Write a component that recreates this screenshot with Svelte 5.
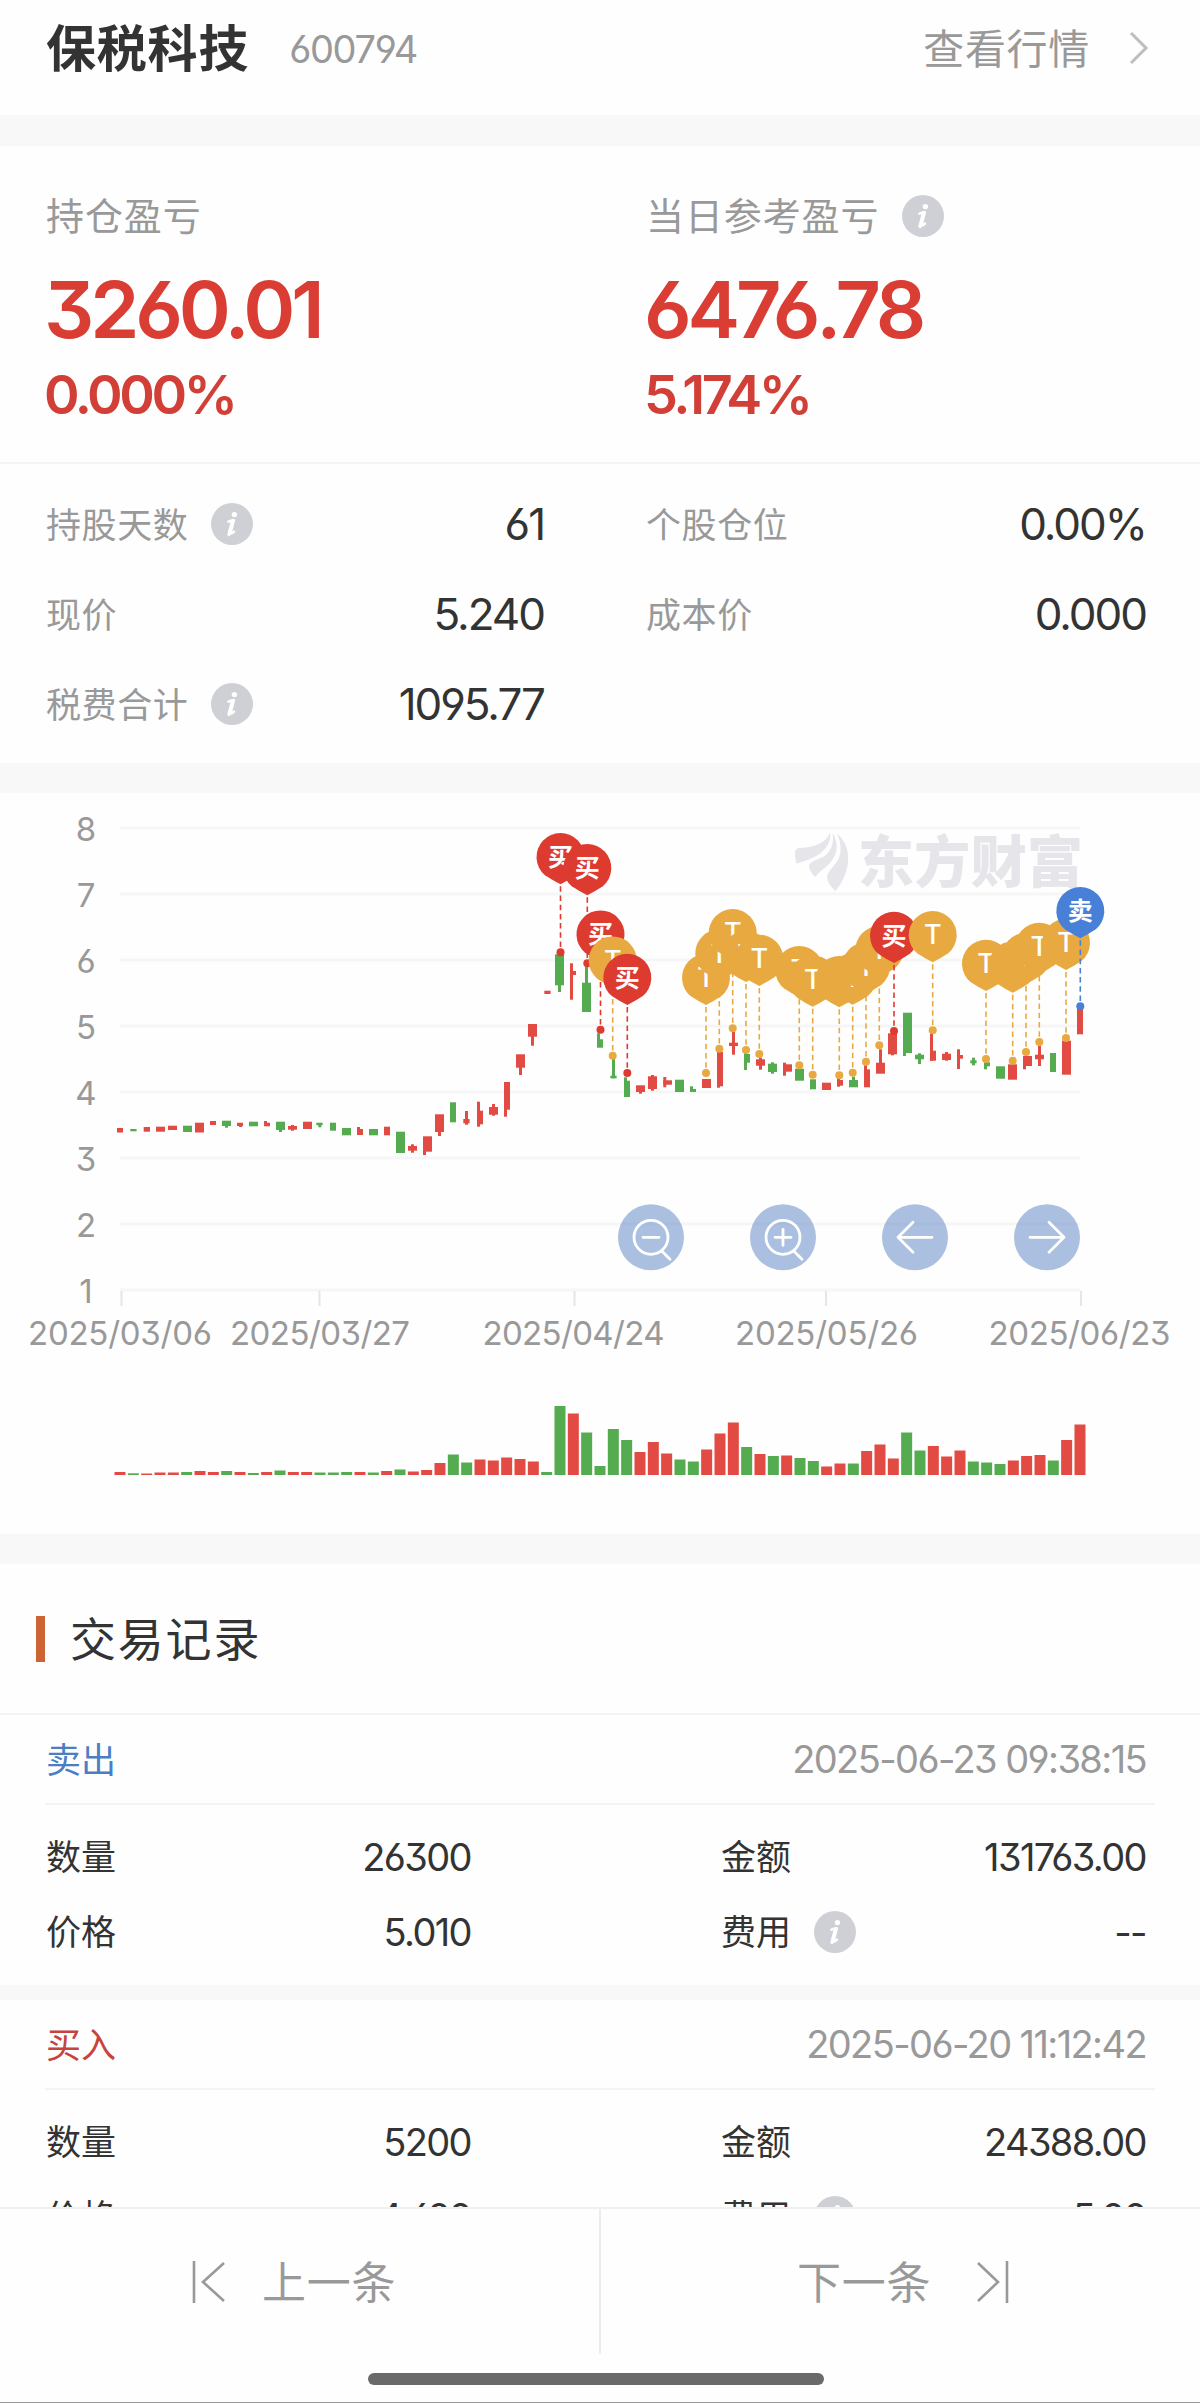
<script>
    // all chart coordinates are in svg units, 66 units per price step
    const gridLines = [8, 7, 6, 5, 4, 3, 2, 1].map((price, i) => ({ price, y: 38 + i * 66 }));

    const dates = [
        { x: 120, tick: 121.5, text: "2025/03/06", w: 184 },
        { x: 320, tick: 319.5, text: "2025/03/27", w: 180 },
        { x: 573.5, tick: 574.5, text: "2025/04/24", w: 182 },
        { x: 826.5, tick: 826, text: "2025/05/26", w: 183 },
        { x: 1079.5, tick: 1081, text: "2025/06/23", w: 182 }
    ];

    // [color, x, width, top, bottom, wick x, wick top, wick bottom]
    const candles = [
        ["r", 117, 6, 338, 342.5],
        ["g", 130.3, 6.3, 339, 341.3],
        ["r", 143.7, 6.3, 337, 341.7],
        ["r", 156, 9, 336.7, 341.7],
        ["r", 168, 9, 335.7, 340],
        ["g", 183, 9, 335.7, 342],
        ["r", 195, 9, 332.7, 342.5],
        ["r", 210, 6, 331, 335],
        ["g", 222, 9, 330.7, 336, 225, 336, 337.7],
        ["r", 237, 6, 332.7, 336, 239, 336, 337],
        ["g", 249, 9, 331.7, 336.3],
        ["r", 264, 6, 332.7, 336.3, 264, 331, 336],
        ["g", 276, 9, 331.7, 340, 279, 340, 342],
        ["r", 288, 9, 336, 339.7, 291, 335, 340.7],
        ["r", 303, 9, 331.7, 339],
        ["g", 316.3, 6.3, 332.7, 335.2, 318.3, 335, 337.3],
        ["g", 330, 6, 332.7, 340.7],
        ["g", 342, 9, 338, 345.3],
        ["r", 357, 6, 339, 345, 357, 337, 345],
        ["g", 369, 9, 339, 345.3],
        ["r", 384, 6, 336.7, 345.3],
        ["g", 396, 9, 341.7, 363],
        ["r", 408, 9, 356, 360.7, 411, 354.3, 362.7],
        ["r", 423, 9, 346.3, 361.7, 423, 361, 365],
        ["r", 435, 9, 324.3, 342, 438, 342, 346],
        ["g", 450, 6, 312.3, 332.3],
        ["r", 463.3, 6.3, 329, 333.3, 465, 321, 334.7],
        ["r", 477, 6, 320.7, 334.3, 477, 311.7, 336.7],
        ["r", 489, 9, 317, 324.7, 492, 314, 325.7],
        ["r", 504, 6, 292, 319.7, 504, 292, 326.7],
        ["r", 516, 9, 264.3, 277.7, 519, 277, 285],
        ["r", 528, 9, 234, 246.7, 531, 246, 255.7],
        ["r", 544.3, 6.3, 200.7, 204],
        ["g", 555, 9, 164.3, 195.3, 558, 195, 202],
        ["r", 570, 6, 181, 185, 570, 173.3, 209.7],
        ["g", 582, 9, 192.7, 222, 585, 176.7, 193],
        ["g", 597, 6, 249.3, 257.7, 597, 243.3, 257],
        ["g", 610.3, 6.3, 285.7, 288.3, 612, 268.3, 288.3],
        ["g", 624, 6, 290.7, 307, 624, 287.3, 307],
        ["r", 636, 9, 295.3, 302, 639, 302, 303.7],
        ["r", 648, 9, 286.3, 299, 651, 285, 300.7],
        ["r", 663.3, 8.7, 290.3, 294.7, 663.3, 287, 297.3],
        ["g", 675, 9, 289.7, 302],
        ["g", 690, 6, 299, 302, 690, 296.3, 302],
        ["r", 702, 9, 289, 298],
        ["r", 717, 6, 262, 296.3, 717, 296, 297.7],
        ["r", 729, 9, 252.7, 256, 732, 242, 264.7],
        ["g", 744, 6, 264, 272.7, 744, 263.3, 280],
        ["r", 756, 9, 269.3, 275.7, 759, 267.7, 279.7],
        ["g", 768, 9, 273.7, 282, 771, 272.3, 283.7],
        ["r", 783, 9, 274.3, 281.7, 783, 272.7, 285.7],
        ["g", 795, 9, 278.7, 290.7],
        ["g", 810, 6, 289.3, 299.3],
        ["r", 822, 9, 292.7, 300],
        ["r", 837, 6, 290, 295.7, 837, 288.7, 296.7],
        ["g", 849, 9, 290, 297.3, 852, 286.7, 297],
        ["r", 864, 6, 279.3, 297.3, 864, 275.3, 297],
        ["r", 876, 9, 272.7, 283.7, 879, 259.3, 283],
        ["r", 888, 9, 243.3, 264.3, 891, 264, 265.3],
        ["g", 903, 9, 222.7, 263, 903, 263, 266],
        ["g", 915, 9, 264.7, 269.3, 918, 263.3, 274],
        ["r", 930, 6, 260.7, 270.7, 930, 243.3, 270.7],
        ["r", 942, 9, 263.7, 270, 945, 262, 270.7],
        ["r", 957, 6, 265, 268.7, 957, 259.3, 279],
        ["g", 970.3, 6.3, 270.3, 273.3, 972, 267.7, 275.3],
        ["g", 984, 6, 272.3, 276.3, 984, 276, 279.3],
        ["g", 996, 9, 276.3, 288.7],
        ["r", 1008, 9, 274.3, 289.7],
        ["r", 1023, 9, 266, 276, 1023, 276, 279.3],
        ["r", 1035, 9, 264.7, 269.3, 1038, 256, 276],
        ["g", 1050, 6, 263, 282],
        ["r", 1062, 9, 250.7, 284.7],
        ["r", 1077, 6, 218.3, 244.3]
    ];

    // [x, y of the price dot, kind]
    const markers = [
        [560.5, 162.3, "buy"], [587.3, 173.3, "buy"], [600.5, 239.7, "buy"],
        [612.7, 265.7, "t"], [627.3, 283, "buy"], [706, 283, "t"],
        [719.3, 258.7, "t"], [732.7, 238.3, "t"], [746, 260, "t"],
        [759.3, 264, "t"], [799.3, 275.3, "t"], [812.7, 284.7, "t"],
        [839.3, 285.3, "t"], [852.7, 282.7, "t"], [866, 271.7, "t"],
        [879.3, 255.3, "t"], [894, 241, "buy"], [932.7, 240.3, "t"],
        [986, 269, "t"], [1012.7, 270.7, "t"], [1026, 262, "t"],
        [1039.3, 252, "t"], [1066, 248, "t"], [1080.3, 216.3, "sell"]
    ];
    const markerText = { buy: "买", t: "T", sell: "卖" };

    const volumes = [
        "r3", "g1.7", "r1.5", "r2.5", "r2.5", "g3", "r4", "r3", "g4", "r3",
        "g2", "r3", "g4.5", "r3", "r3", "g2.5", "g2.5", "g3", "r3", "g2.5",
        "r4", "g5.5", "r3.5", "r5", "r12", "g20.5", "g12.5", "r15.5", "r14.5", "r17.5",
        "r16", "r13.5", "g3", "g69", "r61.5", "g42.5", "g9", "g46", "g35", "r23",
        "r33", "r21.5", "g15.5", "g13.5", "r25.5", "r41.5", "r52.5", "g28", "r21", "g19",
        "r19.5", "g17", "g14", "r8.5", "r11.5", "g11.5", "r24", "r30.5", "r16.5", "g42.5",
        "g24.5", "r29", "r18.5", "r24.5", "g13.5", "g12.5", "g11", "r14.5", "r19", "r20",
        "g14.5", "r35", "r50.5"
    ].map((v) => ({ color: v[0], h: Number(v.slice(1)) }));

    const stats = [
        { label: "持股天数", info: true, value: "61" },
        { label: "个股仓位", value: "0.00%" },
        { label: "现价", value: "5.240" },
        { label: "成本价", value: "0.000" },
        { label: "税费合计", info: true, value: "1095.77" }
    ];

    const records = [
        { side: "sell", name: "卖出", time: "2025-06-23 09:38:15", count: "26300", amount: "131763.00", price: "5.010", fee: "--" },
        { side: "buy", name: "买入", time: "2025-06-20 11:12:42", count: "5200", amount: "24388.00", price: "4.690", fee: "5.00" }
    ];
</script>

{#snippet info()}
    <svg class="info" viewBox="0 0 42 42">
        <circle cx="21" cy="21" r="21" fill="#cfd0d5" />
        <circle cx="23.4" cy="11.6" r="2.7" fill="#fff" />
        <path d="M17.4 18.6 Q20 17.6 22.8 17.2 L19.4 30.4 Q20.6 31 23 28.6" fill="none" stroke="#fff" stroke-width="2.6" stroke-linejoin="round" stroke-linecap="round" />
        <path d="M21.6 18 L18 31.4" stroke="#fff" stroke-width="3.4" stroke-linecap="round" />
    </svg>
{/snippet}

<div class="page">
    <header>
        <h1>保税科技</h1>
        <span class="code num">600794</span>
        <span class="quote">查看行情</span>
        <svg class="chevron" width="20" height="34" viewBox="0 0 20 34">
            <path d="M2 2 L17 17 L2 32" fill="none" stroke="#bdbdbd" stroke-width="3" />
        </svg>
    </header>

    <section class="profit">
        <div>
            <p class="label"><span>持仓盈亏</span></p>
            <p class="big num">3260.01</p>
            <p class="pct num">0.000%</p>
        </div>
        <div>
            <p class="label"><span>当日参考盈亏</span>{@render info()}</p>
            <p class="big num">6476.78</p>
            <p class="pct num">5.174%</p>
        </div>
    </section>

    <section class="stats">
        {#each stats as s}
            <div class="stat">
                <span class="name">{s.label}</span>
                {#if s.info}{@render info()}{/if}
                <span class="value num">{s.value}</span>
            </div>
        {/each}
    </section>

    <section class="chart">
        <svg width="1200" height="741" viewBox="0 3 1200 741">
            {#each gridLines as g}
                <rect x="120" y={g.y - 1.5} width="960" height="3" fill="#f6f6f6" />
                <text class="axis" x="86" y={g.y + 13} text-anchor="middle">{g.price}</text>
            {/each}
            {#each dates as d}
                <rect x={d.tick - 1} y="501" width="2" height="15" fill="#e6e6e6" />
                <text class="axis" x={d.x - d.w / 2} y="555" textLength={d.w}>{d.text}</text>
            {/each}

            <g fill="#e5e5ea">
                <path d="M795 63 C795 59 797 58 801 58 C815 57 826 53 830 42.500 C832 53 824 63 812 68 C806 71 801 72 796.500 73.500 C795.500 70 795 66 795 63 Z" />
                <path d="M832.500 43 C840 55 837 66 828 75 C822 80 818 83 815 87 C811 83 809.500 79 809 76 C810 70 820 70 826 65 C832 59 834 52 832.500 43 Z" />
                <path d="M837 43.500 C846 51 849 62 848 72 C847 84 841 94 835.500 101 C831 97 827 92 827 86 C829 79 837 75 840 65 C841.500 57 840 50 837 43.500 Z" />
                <text class="brand" x="858" y="92" textLength="225">东方财富</text>
            </g>

            {#each candles as [color, x, w, top, bottom, wx, wTop, wBottom]}
                <g class={color}>
                    <rect {x} y={top} width={w} height={bottom - top} />
                    {#if wx}
                        <rect x={wx} y={wTop} width="3" height={wBottom - wTop} />
                    {/if}
                </g>
            {/each}

            {#each markers as [x, y, kind]}
                <g class={kind} transform="translate({x} {y})">
                    <path class="stem" d="M0 -66 V-4" stroke-width="1.6" stroke-dasharray="5.500 3.700" />
                    <circle r="4" />
                    <path class="pin" d="M-15.500 -77 A24 24 0 1 1 15.500 -77 Q8 -72 0 -68 Q-8 -72 -15.500 -77 Z" />
                    <text class:latin={kind == "t"} y={kind == "t" ? -86 : -86.5} text-anchor="middle">{markerText[kind]}</text>
                </g>
            {/each}

            {#each volumes as v, i}
                <rect class={v.color} x={114.5 + i * 13.333} y={685 - v.h} width="11" height={v.h} />
            {/each}

            {#each [651, 783, 915, 1047] as x, i}
                <g class="tool" transform="translate({x} 447.3)">
                    <circle r="33" />
                    {#if i < 2}
                        <path d="M17 0 A17 17 0 1 1 -17 0 A17 17 0 1 1 17 0 M10.500 13.500 L19 22 M-8 0 H8" />
                        {#if i == 1}<path d="M0 -8 V8" />{/if}
                    {:else}
                        <path d="M-17 0 H17 M-2 -15 L-17 0 L-2 15" transform={i == 3 ? "scale(-1 1)" : null} />
                    {/if}
                </g>
            {/each}
        </svg>
    </section>

    <section class="records">
        <h2><span>交易记录</span></h2>
        {#each records as r}
            <article>
                <div class="head">
                    <span class={r.side}>{r.name}</span>
                    <span class="time num">{r.time}</span>
                </div>
                <div class="fields">
                    <span>数量</span>
                    <span class="num">{r.count}</span>
                    <span>金额</span>
                    <span class="num">{r.amount}</span>
                    <span>价格</span>
                    <span class="num">{r.price}</span>
                    <span>费用 {@render info()}</span>
                    <span class="num">{r.fee}</span>
                </div>
            </article>
        {/each}
    </section>

    <footer>
        <nav>
            <div class="prev">
                <svg width="36" height="44" viewBox="0 0 36 44"><path d="M2 1 V43 M32 3 L11 22 L32 41" /></svg>
                <span>上一条</span>
            </div>
            <div class="next">
                <span>下一条</span>
                <svg width="36" height="44" viewBox="0 0 36 44"><path d="M31 1 V43 M2 3 L22 22 L2 41" /></svg>
            </div>
        </nav>
        <div class="home"></div>
    </footer>
</div>

<style>
    :global(body) {
        margin: 0;
        background: #fefefe;
    }
    .page {
        width: 1200px;
        height: 2403px;
        display: flex;
        flex-direction: column;
        overflow: hidden;
        font-family: "Noto Sans CJK SC", sans-serif;
        color: #333;
        background: #fefefe;
    }
    h1, h2, p {
        margin: 0;
        font-weight: 400;
    }
    .num {
        font-family: Inter, sans-serif;
        font-feature-settings: "cv03", "cv04", "cv09";
        letter-spacing: -0.042em;
    }
    .info {
        width: 42px;
        height: 42px;
        flex: none;
    }

    header {
        height: 115px;
        box-sizing: border-box;
        padding: 0 51px 20px 46px;
        display: flex;
        align-items: center;
    }
    h1 {
        font-size: 50px;
        line-height: 70px;
        font-weight: 600;
        letter-spacing: 0.8px;
        padding-bottom: 5px;
    }
    .code {
        font-size: 38px;
        letter-spacing: -0.035em;
        color: #999;
        margin-left: 40px;
        padding-top: 2px;
        flex: 1;
    }
    .quote {
        font-size: 41px;
        letter-spacing: 0.7px;
        color: #999;
        padding-bottom: 4px;
    }
    .chevron {
        margin-left: 39px;
    }

    .profit {
        height: 349px;
        box-sizing: border-box;
        border-top: 31px solid #f8f8f8;
        border-bottom: 2px solid #f4f4f4;
        display: grid;
        grid-template-columns: 600px 600px;
    }
    .profit div {
        padding: 46px 0 0 46px;
    }
    .label {
        display: flex;
        align-items: center;
        height: 48px;
        font-size: 38px;
        letter-spacing: 0.9px;
        color: #999;
    }
    .label span {
        padding-bottom: 5px;
    }
    .label .info {
        margin-left: 23px;
    }
    .big {
        height: 80px;
        line-height: 80px;
        margin: 29px 0 0 -2px;
        font-size: 79px;
        font-weight: 600;
        letter-spacing: -0.053em;
        color: #da3d34;
    }
    .pct {
        line-height: 60px;
        margin: 16px 0 0 -2px;
        font-size: 54px;
        font-weight: 600;
        letter-spacing: -0.063em;
        color: #d13f37;
    }

    .stats {
        height: 299px;
        box-sizing: border-box;
        padding: 15px 54px 0 46px;
        display: grid;
        grid-template-columns: 498px 500px;
        grid-auto-rows: 90px;
        column-gap: 102px;
    }
    .stat {
        display: flex;
        align-items: center;
    }
    .name {
        font-size: 35px;
        letter-spacing: 0.6px;
        color: #999;
        padding-bottom: 4px;
    }
    .stat .info {
        margin-left: 23px;
    }
    .value {
        margin-left: auto;
        font-size: 44px;
        letter-spacing: -0.046em;
    }

    .chart {
        border-top: 30px solid #f8f8f8;
    }
    .chart svg {
        display: block;
    }
    .axis {
        font: 33px Inter, sans-serif;
        font-feature-settings: "cv03", "cv04", "cv09";
        fill: #999;
    }
    .brand {
        font: 900 56px "Noto Sans CJK SC", sans-serif;
    }
    svg .r {
        fill: #e24b44;
    }
    svg .g {
        fill: #55ab50;
    }
    svg .buy {
        fill: #dd3a30;
        stroke: #dd3a30;
    }
    svg .t {
        fill: #e8a940;
        stroke: #e8a940;
    }
    svg .sell {
        fill: #4880d8;
        stroke: #4880d8;
    }
    svg circle, svg .pin {
        stroke: none;
    }
    .chart g text {
        stroke: none;
    }
    .buy text, .sell text {
        fill: #fff;
        font: 700 25px "Noto Sans CJK SC", sans-serif;
    }
    .t text {
        fill: #fff;
    }
    .t text.latin {
        font: 500 27px Inter, sans-serif;
    }
    .tool circle {
        fill: #6b90c9;
        fill-opacity: 0.57;
    }
    .tool path {
        fill: none;
        stroke: #fff;
        stroke-width: 2.8;
        stroke-linecap: round;
        stroke-linejoin: round;
    }

    .records {
        height: 673px;
        box-sizing: border-box;
        overflow: hidden;
        border-top: 30px solid #f8f8f8;
    }
    h2 {
        height: 149px;
        display: flex;
        align-items: center;
        font-size: 46px;
        letter-spacing: 1.8px;
        padding-left: 36px;
        border-bottom: 2px solid #f4f4f4;
    }
    h2::before {
        content: "";
        width: 9px;
        height: 46px;
        margin-right: 25px;
        background: #cc6433;
    }
    h2 span {
        padding-bottom: 5px;
    }
    article + article {
        border-top: 15px solid #f8f8f8;
    }
    .head {
        height: 88px;
        margin: 0 45px;
        padding: 0 9px 0 1px;
        display: flex;
        align-items: center;
        justify-content: space-between;
        border-bottom: 2px solid #f4f4f4;
        font-size: 35px;
    }
    .head .sell, .head .buy {
        padding-bottom: 4px;
    }
    .head .sell {
        color: #4a7fc4;
    }
    .head .buy {
        color: #c5443c;
    }
    .head .time {
        font-size: 38px;
        color: #999;
    }
    .fields {
        padding: 14px 54px 16px 46px;
        display: grid;
        grid-template-columns: 200px 225px 1fr 253px;
        grid-auto-rows: 75px;
        align-items: center;
        font-size: 35px;
    }
    .fields span {
        display: flex;
        align-items: center;
        height: 71px;
        margin-top: -4px;
    }
    .fields span.num {
        margin-top: 0;
    }
    .fields span:nth-child(4n + 3) {
        padding-left: 250px;
    }
    .fields .num {
        justify-content: flex-end;
        font-size: 38px;
    }
    .fields .info {
        margin: 4px 0 0 23px;
    }

    footer {
        height: 196px;
        box-sizing: border-box;
        border-top: 2px solid #f0f0f0;
        border-bottom: 1px solid #999;
    }
    nav {
        display: flex;
        height: 145px;
        color: #999;
        font-size: 44px;
        letter-spacing: 0.8px;
    }
    nav div {
        display: flex;
        align-items: center;
        box-sizing: border-box;
    }
    nav span {
        padding-bottom: 4px;
    }
    nav path {
        fill: none;
        stroke: #999;
        stroke-width: 2.6;
    }
    .prev {
        width: 601px;
        border-right: 2px solid #ececec;
        padding-left: 192px;
        gap: 34px;
    }
    .next {
        padding-left: 196px;
        gap: 45px;
    }
    .home {
        width: 456px;
        height: 12px;
        margin: 19px 0 0 368px;
        border-radius: 6px;
        background: #6a6a6a;
    }
</style>
